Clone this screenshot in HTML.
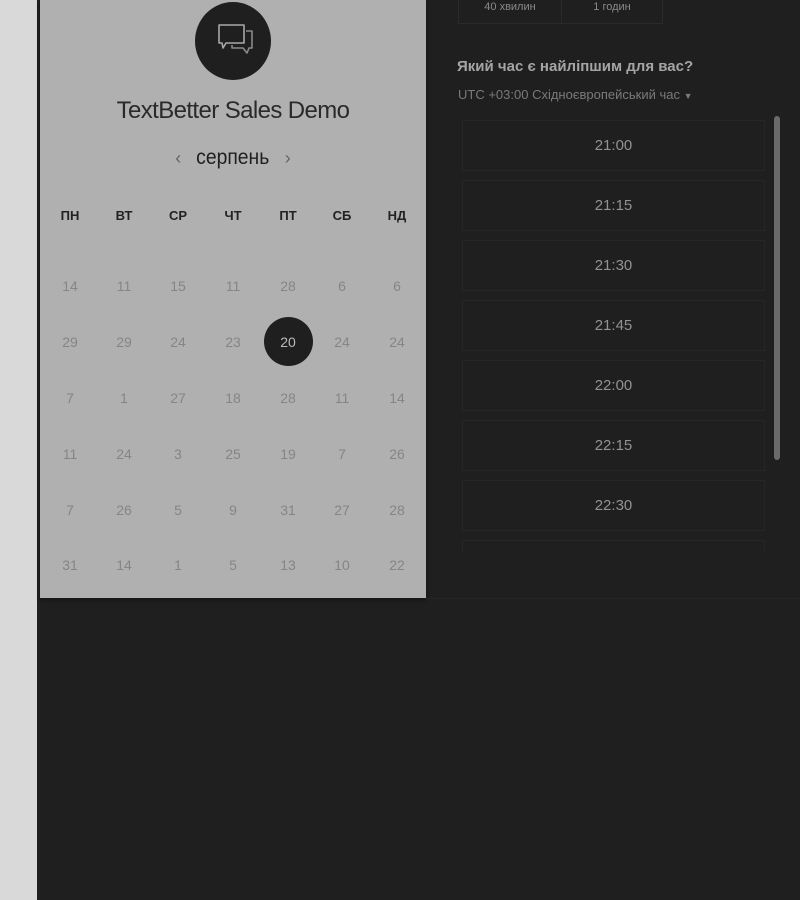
<!DOCTYPE html>
<html><head><meta charset="utf-8"><style>
*{margin:0;padding:0;box-sizing:border-box}
body{width:800px;height:900px;background:#1f1f1f;position:relative;overflow:hidden;font-family:"Liberation Sans",sans-serif}
.strip{position:absolute;left:0;top:0;width:37px;height:900px;background:#d9d9d9}
.panel{position:absolute;left:40px;top:0;width:386px;height:598px;background:#b0b0b0;box-shadow:0 2px 4px rgba(0,0,0,.4)}
.logo{position:absolute;left:195px;top:2px;width:76px;height:78px;border-radius:50%;background:#1f1f1f}
.title{position:absolute;left:40px;width:386px;top:97px;text-align:center;font-size:24px;color:#2a2a2a;letter-spacing:-0.6px}
.month{position:absolute;left:40px;width:386px;top:146px;text-align:center;font-size:21px;color:#1f1f1f}
.month b{font-weight:normal;display:inline-block;transform:scaleX(.92)}
.month span{color:#666;font-size:18px;margin:0 12px}
.c{position:absolute;width:50px;text-align:center;transform:translateX(-25px);font-size:14px;color:#858585}
.h{font-weight:bold;color:#222;font-size:13px}
.sel{position:absolute;left:264px;top:317px;width:49px;height:49px;border-radius:50%;background:#1f1f1f}
.slot{position:absolute;left:462px;width:303px;height:51px;border:1px solid #262626;text-align:center;line-height:49px;color:#929292;font-size:15px}
.top{position:absolute;top:-2px;height:26px;border:1px solid #2a2a2a;border-top:none;color:#8a8a8a;font-size:11px;text-align:center;line-height:18px}
</style></head><body>
<div class="strip"></div>
<div class="panel"></div>
<div class="logo"><svg width="76" height="78" viewBox="0 0 76 78"><g fill="none" stroke="#a8a8a8" stroke-width="1.6" stroke-linejoin="round"><path d="M24 23h25v18H31l-3 5-1-5h-3z"/><path d="M51 29h6v17h-3l-2 5-4-5h-11v-3" stroke="#8a8a8a"/></g></svg></div>
<div class="title">TextBetter Sales Demo</div>
<div class="month"><span>‹</span><b>серпень</b><span>›</span></div>
<div class="sel"></div>
<div id="cal"></div>
<div class="top" style="left:458px;width:104px">40 хвилин</div>
<div class="top" style="left:562px;width:101px;border-left:none">1 годин</div>
<div style="position:absolute;left:457px;top:58px;font-size:15px;font-weight:bold;color:#a5a5a5">Який час є найліпшим для вас?</div>
<div style="position:absolute;left:458px;top:87px;font-size:13px;color:#7a7a7a">UTC +03:00 Східноєвропейський час <span style="font-size:9px">▼</span></div>
<div class="slot" style="top:120px">21:00</div>
<div class="slot" style="top:180px">21:15</div>
<div class="slot" style="top:240px">21:30</div>
<div class="slot" style="top:300px">21:45</div>
<div class="slot" style="top:360px">22:00</div>
<div class="slot" style="top:420px">22:15</div>
<div class="slot" style="top:480px">22:30</div>
<div class="slot" style="top:540px;height:12px;border-bottom:none"></div>
<div style="position:absolute;left:426px;top:598px;width:374px;height:2px;background:#1f1f1f;border-top:1px solid #262626"></div>
<div style="position:absolute;left:774px;top:116px;width:6px;height:344px;border-radius:3px;background:#6a6a6a"></div>
<script>
var xs=[70,124,178,233,288,342,397],ys=[286,342,398,454,510,565];
var d=[[14,11,15,11,28,6,6],[29,29,24,23,20,24,24],[7,1,27,18,28,11,14],[11,24,3,25,19,7,26],[7,26,5,9,31,27,28],[31,14,1,5,13,10,22]];
var hd=["ПН","ВТ","СР","ЧТ","ПТ","СБ","НД"],o="";
for(var i=0;i<7;i++)o+='<div class="c h" style="left:'+xs[i]+'px;top:208px">'+hd[i]+'</div>';
for(var r=0;r<6;r++)for(var i=0;i<7;i++){var s=(r==1&&i==4)?'color:#bbb;':'';o+='<div class="c" style="'+s+'left:'+xs[i]+'px;top:'+(ys[r]-8)+'px">'+d[r][i]+'</div>';}
document.getElementById('cal').innerHTML=o;
</script>
</body></html>
